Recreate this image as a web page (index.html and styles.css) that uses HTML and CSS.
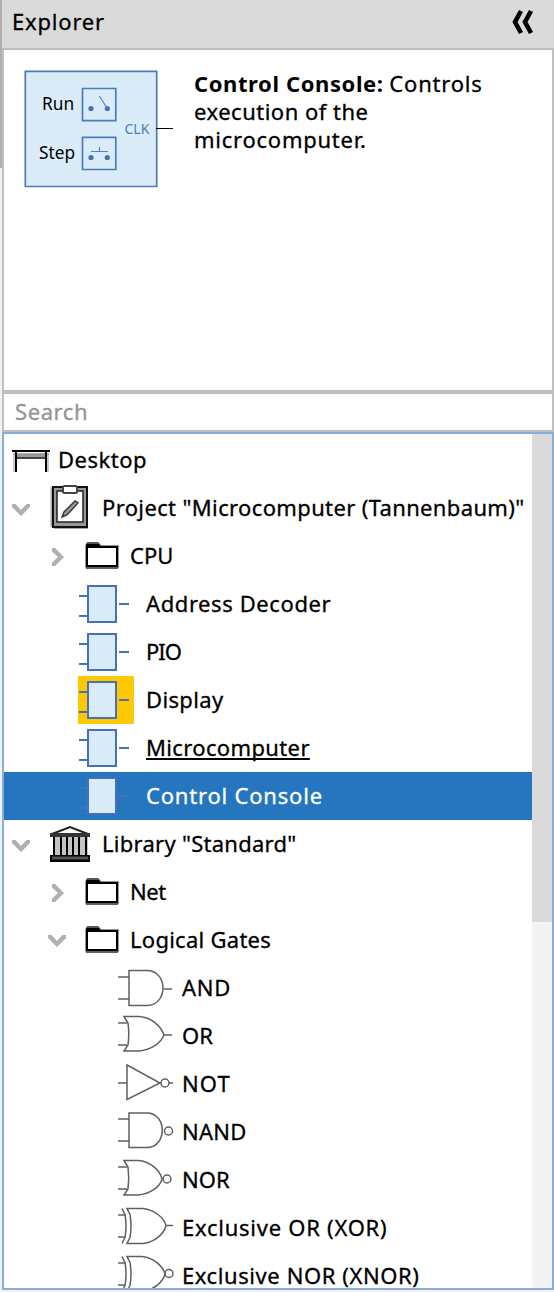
FILE: index.html
```
<!DOCTYPE html>
<html lang="en">
<head>
<meta charset="utf-8">
<title>Explorer</title>
<link rel="stylesheet" href="styles.css">
</head>
<body>
<svg class="defs" width="0" height="0">
  <symbol id="down" viewBox="0 0 18 12"><path d="M0 0h3.500L9 6l5.500-6H18v3L9 12 0 3z" fill="#b0b0b0"/></symbol>
  <symbol id="right" viewBox="0 0 12 18"><path d="M0 0h3L12 9l-9 9H0v-3.500L6 9 0 3.500z" fill="#b0b0b0"/></symbol>
  <symbol id="folder" viewBox="0 0 36 48">
    <path d="M2 12q0-2 2-2h10l4 4H2z" fill="#555"/>
    <path d="M3 15h30v19H3z" fill="none" stroke="#999" stroke-width="4"/>
    <path d="M2 34h32v3H2z" fill="#606060"/>
    <path d="M3 15h30v19H3z" fill="#fff" stroke="#000" stroke-width="2"/>
    <path d="M2 12h12l3 2v2H2z"/>
  </symbol>
  <symbol id="chip" viewBox="0 0 56 48">
    <path d="M1 16h9M1 36h9M41 24h10" stroke="#4571b8" stroke-width="2"/>
    <path d="M10 6h28v36H10z" fill="#daecf8" stroke="#4571b8" stroke-width="2"/>
  </symbol>
  <symbol id="and" viewBox="0 0 56 48"><path d="M0 13h11M0 35h11M11 6.500h19C50 8 50 40 30 41.500H11zM46 25h8"/></symbol>
  <symbol id="or" viewBox="0 0 56 48"><path d="M0 11h9M0 33h9M6 4.500h15C33 5 43 14 46 23 43 31 33 38 21 39H6l4-6q1.500-11 0-22zM46 23h8"/></symbol>
  <symbol id="not" viewBox="0 0 56 48"><path d="M0 23h9M9 5l33 18L9 39.500zM51 23h4"/><circle cx="47" cy="23" r="4"/></symbol>
  <symbol id="nand" viewBox="0 0 56 48"><path d="M0 11h11M0 33h11M11 5h19C49 6.500 49 38 30 39.500H11z"/><circle cx="50.500" cy="23" r="4"/></symbol>
  <symbol id="nor" viewBox="0 0 56 48"><path d="M0 11h9M0 33h9M6 4.500h14C32 5 42 14 44 23 42 31 32 38 20 39H6l4-6q1.500-11 0-22z"/><circle cx="49" cy="23" r="4"/></symbol>
  <symbol id="xor" viewBox="0 0 56 48"><path d="M0 11h7M0 33h7M4 4.500l3 6q2 11.500 0 23l-3 6M9 4.500h16C37 6 46 14 48 21.500 46 30 37 38 25 39.500H9l3-6q2-11.500 0-23zM48 21.500h7"/></symbol>
  <symbol id="xnor" viewBox="0 0 56 48"><path d="M0 11h7M0 33h7M4 4.500l3 6q2 11.500 0 23l-3 6M9 4.500h15C36 6 45 14 47 22 45 30 36 38 24 39.500H9l3-6q2-11.500 0-23z"/><circle cx="51" cy="21.500" r="4"/></symbol>
</svg>
<div class="explorer">
  <div class="edge"></div>
  <div class="pane">
    <header class="header">
      <span class="title ls8">Explorer</span>
      <svg class="collapse" width="24" height="26" viewBox="0 0 24 26"><path d="M11 2 5 13l6 11M21 2l-6 11 6 11" fill="none" stroke="#000" stroke-width="4.600"/></svg>
    </header>
    <section class="preview">
      <svg class="console" width="160" height="130" viewBox="20 65 160 130">
        <path d="M25.300 71.300h131.400v115.200H25.300z" fill="#daecf8" stroke="#4d79bd" stroke-width="1.700"/>
        <g fill="#daecf8" stroke="#4d79bd" stroke-width="1.700"><path d="M82.500 88.500h33.300v32.200H82.500zM82.500 137.300h33.300v32.200H82.500z"/></g>
        <g fill="#4571b8"><circle cx="91" cy="108.500" r="2.600"/><circle cx="107.300" cy="108.500" r="2.600"/><circle cx="91" cy="157.500" r="2.600"/><circle cx="107.300" cy="157.500" r="2.600"/></g>
        <path d="m99.300 96 8 12.500M91 151.500h17M99.500 147v4.500" fill="none" stroke="#5580c4" stroke-width="1.200"/>
        <path d="M156 128.500h17" stroke="#000"/>
        <text class="label" x="42" y="110">Run</text>
        <text class="label" x="39" y="159">Step</text>
        <text class="pin" x="124.500" y="134">CLK</text>
      </svg>
      <p class="about"><b>Control Console:</b> <span class="ls8">Controls</span><br><span class="ls5">execution of the</span><br><span class="ls75">microcomputer.</span></p>
    </section>
    <div class="search"><span class="ls6">Search</span></div>
    <section class="tree">
      <ul class="rows">
        <li class="row root"><svg class="desk" width="38" height="48" viewBox="0 0 38 48"><path d="M2 18v18M36 18v18" stroke="#ccc" stroke-width="2"/><path d="M1 17h36v2H1z" fill="#aaa"/><path d="M4 18h30v3H4z" fill="#999"/><path d="M4 21h30v2H4z" fill="#444"/><path d="M0 14h38v2H0zM3 16h2v20H3zM33 16h2v20h-2z"/></svg><span class="ls5">Desktop</span></li>
        <li class="row top"><svg class="down" width="18" height="12"><use href="#down"/></svg><svg class="badge" width="40" height="48" viewBox="50 484 40 48"><path d="M51.500 487v40M54 528h34" fill="none" stroke="#aaa" stroke-width="2"/><path d="M53 487h34v40H53z" fill="#999" stroke="#111" stroke-width="2"/><path d="M57 491h26v31H57z" fill="#fff" stroke="#222" stroke-width="1.500"/><rect x="63" y="486" width="14" height="7" rx="1.500" fill="#fff" stroke="#444" stroke-width="2"/><path d="m62 517 2-5 11-11 3 2-11 12z" fill="#999" stroke="#333" stroke-width="1.400"/></svg><span class="ls38">Project "Microcomputer (Tannenbaum)"</span></li>
        <li class="row group"><svg class="right" width="12" height="18"><use href="#right"/></svg><svg class="folder"><use href="#folder"/></svg><span>CPU</span></li>
        <li class="row part"><svg class="chip"><use href="#chip"/></svg><span class="ls6">Address Decoder</span></li>
        <li class="row part"><svg class="chip"><use href="#chip"/></svg><span class="tight">PIO</span></li>
        <li class="row part"><svg class="chip marked"><use href="#chip"/></svg><span class="ls38">Display</span></li>
        <li class="row part"><svg class="chip"><use href="#chip"/></svg><span class="open ls38">Microcomputer</span></li>
        <li class="row part selected"><svg class="chip"><use href="#chip"/></svg><span class="ls8">Control Console</span></li>
        <li class="row top"><svg class="down" width="18" height="12"><use href="#down"/></svg><svg class="badge" width="40" height="48" viewBox="50 820 40 48"><path d="m52 834 18-7 18 7z" fill="#fff" stroke="#222" stroke-width="2"/><path d="M50 833h40v4H50z" fill="#333"/><path d="M53 837h35v18H53z" fill="#c4c4c4"/><path d="M54 837v19M61 837v19M67 837v19M73 837v19M79 837v19M86 837v19" stroke="#000" stroke-width="2"/><path d="M50 855h40v7H50z"/><path d="M52 858h36" stroke="#555" stroke-width="3"/></svg><span class="ls27">Library "Standard"</span></li>
        <li class="row group"><svg class="right" width="12" height="18"><use href="#right"/></svg><svg class="folder"><use href="#folder"/></svg><span class="net">Net</span></li>
        <li class="row group expanded"><svg class="down" width="18" height="12"><use href="#down"/></svg><svg class="folder"><use href="#folder"/></svg><span class="ls27">Logical Gates</span></li>
        <li class="row leaf"><svg class="gate"><use href="#and"/></svg><span class="ls75">AND</span></li>
        <li class="row leaf"><svg class="gate"><use href="#or"/></svg><span>OR</span></li>
        <li class="row leaf"><svg class="gate"><use href="#not"/></svg><span class="ls11">NOT</span></li>
        <li class="row leaf"><svg class="gate"><use href="#nand"/></svg><span class="ls27">NAND</span></li>
        <li class="row leaf"><svg class="gate"><use href="#nor"/></svg><span>NOR</span></li>
        <li class="row leaf"><svg class="gate"><use href="#xor"/></svg><span class="ls75">Exclusive OR (XOR)</span></li>
        <li class="row leaf"><svg class="gate"><use href="#xnor"/></svg><span class="ls6">Exclusive NOR (XNOR)</span></li>
      </ul>
      <div class="scrollbar"><div class="thumb"></div></div>
    </section>
  </div>
</div>
</body>
</html>
```
FILE: styles.css
```
* { box-sizing: border-box; }
body { margin: 0; background: #f2f2f2; color: #000; font: 22px/46px "Noto Sans", sans-serif; -webkit-text-stroke: .3px; }
.defs { display: block; height: 0; }
.explorer { display: flex; height: 1292px; overflow: hidden; }
.edge { width: 2px; height: 168px; background: #b0b0b0; }
.pane { width: 552px; height: 1290px; display: flex; flex-direction: column; }
.header { flex: 0 0 50px; display: flex; justify-content: space-between; background: #dadada; border-bottom: 2px solid #bfbfbf; padding: 0 20px 0 10px; line-height: 43px; }
.collapse { margin-top: 9px; }
.preview { flex: 0 0 342px; display: flex; background: #fff; border: solid #bfbfbf; border-width: 0 2px 2px; padding: 15px 0 0 16px; }
.console { flex: none; }
.about { margin: 4px 0 0 14px; line-height: 28px; white-space: nowrap; }
.about b { letter-spacing: .6px; -webkit-text-stroke: 0; }
.label { font: 17.3px "Noto Sans", sans-serif; }
.pin { font: 14px "Noto Sans", sans-serif; fill: #4f7bc0; }
.search { flex: 0 0 40px; background: #fff; border: 2px solid #bfbfbf; padding-left: 11px; color: #949494; line-height: 34px; }
.tree { flex: 0 0 858px; display: flex; background: #fff; border: 2px solid #87aedb; padding-top: 2px; overflow: hidden; }
.rows { flex: 1; margin: 0; padding: 0; list-style: none; height: 852px; overflow: hidden; }
.row { display: flex; height: 48px; white-space: nowrap; }
.row svg { flex: none; display: block; }
.root { padding-left: 7px; }
.root span { margin-left: 8px; }
.desk { margin-left: 1px; }
.top { padding-left: 8px; }
.top .down { margin: 20px 20px 0 0; }
.badge { margin-right: 12px; }
.group { padding-left: 48px; }
.expanded { padding-left: 44px; }
.right { margin: 16px 20px 0 0; }
.expanded .down { margin: 19px 18px 0 0; }
.folder { width: 36px; height: 48px; margin-right: 10px; }
.part { padding-left: 74px; }
.chip { width: 56px; height: 48px; margin-right: 12px; }
.marked { background: #ffc805; }
.selected { background: #2675bf; color: #fff; }
.open { text-decoration: underline; text-decoration-thickness: 2px; text-underline-offset: 2px; text-decoration-skip-ink: none; }
.leaf { padding-left: 114px; }
.gate { width: 56px; height: 48px; margin-right: 8px; fill: none; stroke: #606060; stroke-width: 1.5; }
.scrollbar { width: 20px; margin-top: -2px; background: #f3f3f3; }
.thumb { height: 488px; background: #dadada; }
.tight { letter-spacing: -1px; }
.net { letter-spacing: -.4px; }
.ls27 { letter-spacing: .27px; }
.ls38 { letter-spacing: .36px; }
.ls5 { letter-spacing: .5px; }
.ls6 { letter-spacing: .59px; }
.ls75 { letter-spacing: .75px; }
.ls8 { letter-spacing: .8px; }
.ls11 { letter-spacing: 1.1px; }
```
